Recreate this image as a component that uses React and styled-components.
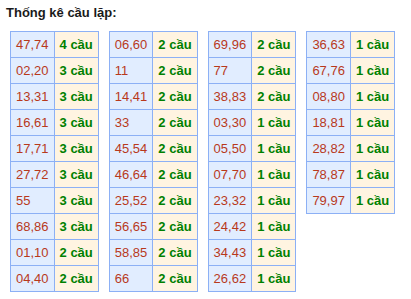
import React from "react";
import styled, { createGlobalStyle } from "styled-components";

const Global = createGlobalStyle`
  html, body { margin: 0; padding: 0; background: #fff; }
  body { font-family: Arial, "Liberation Sans", sans-serif; }
`;

const Page = styled.div`
  padding: 5px 0 0 6px;
`;

const Title = styled.div`
  font-size: 13px;
  line-height: 15px;
  font-weight: bold;
  color: #1a1a1a;
  margin-bottom: 11px;
`;

const Tables = styled.div`
  display: flex;
  align-items: flex-start;
  gap: 10px;
  padding-left: 4px;
`;

const Table = styled.table`
  border-collapse: collapse;
  border: 1px solid #8cb0f5;
  font-size: 13px;
`;

const NumCell = styled.td`
  border: 1px solid #8cb0f5;
  background: #e1edff;
  color: #b8391c;
  height: 26px;
  padding: 0 5px;
  text-align: left;
  vertical-align: middle;
  white-space: nowrap;
  box-sizing: border-box;
`;

const CountCell = styled.td`
  border: 1px solid #8cb0f5;
  background: #fff4e1;
  color: #008000;
  font-weight: bold;
  height: 26px;
  padding: 0 5px;
  text-align: left;
  vertical-align: middle;
  white-space: nowrap;
  box-sizing: border-box;
`;

const data = [
  [["47,74", 4], ["02,20", 3], ["13,31", 3], ["16,61", 3], ["17,71", 3], ["27,72", 3], ["55", 3], ["68,86", 3], ["01,10", 2], ["04,40", 2]],
  [["06,60", 2], ["11", 2], ["14,41", 2], ["33", 2], ["45,54", 2], ["46,64", 2], ["25,52", 2], ["56,65", 2], ["58,85", 2], ["66", 2]],
  [["69,96", 2], ["77", 2], ["38,83", 2], ["03,30", 1], ["05,50", 1], ["07,70", 1], ["23,32", 1], ["24,42", 1], ["34,43", 1], ["26,62", 1]],
  [["36,63", 1], ["67,76", 1], ["08,80", 1], ["18,81", 1], ["28,82", 1], ["78,87", 1], ["79,97", 1]],
];

export default function App() {
  return (
    <>
      <Global />
      <Page>
        <Title>Thống kê cầu lặp:</Title>
        <Tables>
          {data.map((col, i) => (
            <Table key={i}>
              <tbody>
                {col.map(([num, c]) => (
                  <tr key={num}>
                    <NumCell>{num}</NumCell>
                    <CountCell>{c} cầu</CountCell>
                  </tr>
                ))}
              </tbody>
            </Table>
          ))}
        </Tables>
      </Page>
    </>
  );
}
